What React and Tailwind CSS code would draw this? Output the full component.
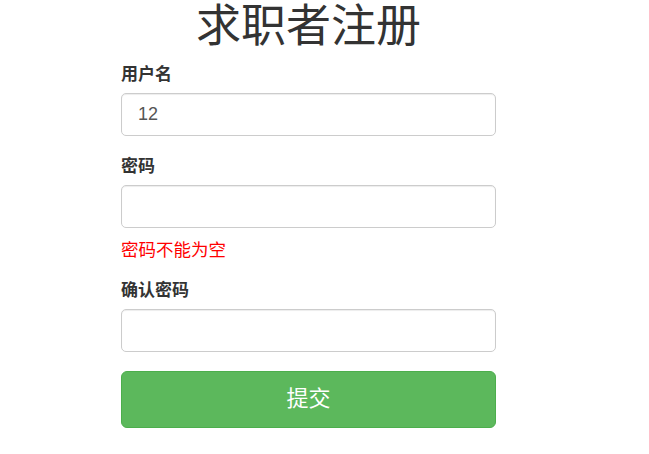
const fontStack = {
  fontFamily: '"Liberation Sans", "Noto Sans CJK SC", sans-serif',
};

const Field = ({ label, value, className = "" }) => (
  <div className={className}>
    <label className="block text-[17px] leading-[24px] font-bold text-[#333] mb-[6px]">
      {label}
    </label>
    <input
      className="block w-full h-[43px] px-4 text-[18px] text-[#555] bg-white border border-[#ccc] rounded-[5px] shadow-[inset_0_1px_1px_rgba(0,0,0,0.075)] outline-none"
      type="text"
      defaultValue={value}
    />
  </div>
);

const App = () => {
  return (
    <div className="min-h-screen bg-white" style={fontStack}>
      <form className="ml-[121px] w-[375px]" onSubmit={(e) => e.preventDefault()}>
        <h1 className="text-center text-[45px] leading-[54px] font-normal text-[#333]">
          求职者注册
        </h1>

        <Field label="用户名" value="12" className="mt-[9px]" />
        <Field label="密码" value="" className="mt-[19px]" />
        <div className="mt-[10px] text-[17.5px] leading-[24px] text-[#ff0000]">
          密码不能为空
        </div>
        <Field label="确认密码" value="" className="mt-[17px]" />

        <button
          type="submit"
          className="block w-full h-[57px] mt-[19px] pb-[3px] bg-[#5cb85c] border border-[#4cae4c] rounded-[6px] text-white text-[22px]"
        >
          提交
        </button>
      </form>
    </div>
  );
};

export default App;
